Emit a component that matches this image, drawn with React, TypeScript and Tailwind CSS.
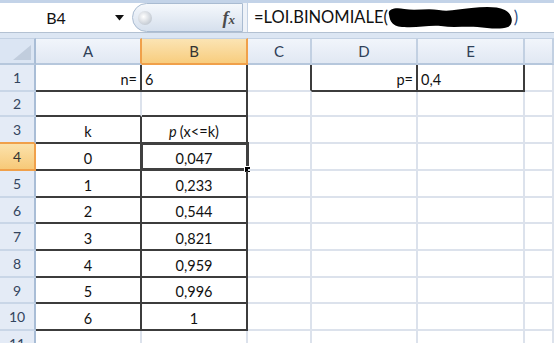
import React from 'react';

type CellProps = {
  dr?: boolean;
  db?: boolean;
  align?: 'left' | 'center' | 'right';
  children?: React.ReactNode;
  selected?: boolean;
};

// one sheet cell, right + bottom borders act as gridlines
const Cell = ({ dr, db, align = 'left', children, selected }: CellProps) => {
  const justify = align === 'center' ? 'justify-center' : align === 'right' ? 'justify-end' : 'justify-start';
  return (
    <div
      className={`relative flex items-end pb-[2px] px-[3px] leading-[17px] text-[14.5px] text-[#111] border-r-2 border-b-2 ${dr ? 'border-r-[#3c3c3c]' : 'border-r-[#dce2ec]'} ${db ? 'border-b-[#3c3c3c]' : 'border-b-[#dce2ec]'} ${justify}`}
    >
      {children}
      {selected && (
        <div className="absolute -left-[2px] -top-[2px] -right-[3px] -bottom-[2px] border-[3px] border-[#404040]">
          <div className="absolute -right-[5px] -bottom-[5px] w-[7px] h-[7px] bg-black border border-white" />
        </div>
      )}
    </div>
  );
};

const RowHead = ({ n, active, beforeActive }: { n: number; active?: boolean; beforeActive?: boolean }) => (
  <div
    className={`flex items-center justify-center text-[14px] border-r-2 border-b-2 ${active ? 'bg-linear-to-b from-[#fbe2ab] to-[#f7c978] border-r-[#f0a04a] border-b-[#f0a04a] text-[#333]' : 'bg-[#e4ebf6] border-r-[#a9bdd6] text-[#33455e]'} ${beforeActive ? 'border-b-[#f0a04a]' : active ? '' : 'border-b-[#c9d6e7]'}`}
  >
    {n}
  </div>
);

const ColHead = ({ label, active, beforeActive }: { label: string; active?: boolean; beforeActive?: boolean }) => (
  <div
    className={`flex items-center justify-center text-[15px] border-r-2 border-b-2 border-t border-t-[#c3d1e3] ${active ? 'bg-linear-to-b from-[#fbe4b3] to-[#f8cd7e] border-r-[#f0a04a] border-b-[#f0a04a] text-[#333]' : 'bg-linear-to-b from-[#f1f5fb] to-[#e1e8f3] border-b-[#b6c7dc] text-[#2f4058]'} ${beforeActive ? 'border-r-[#f0a04a]' : active ? '' : 'border-r-[#c2d0e2]'}`}
  >
    {label}
  </div>
);

const values = ['0,047', '0,233', '0,544', '0,821', '0,959', '0,996', '1'];

export default function App() {
  return (
    <div className="w-[554px] h-[343px] overflow-hidden bg-white font-['Lato',sans-serif]">
      {/* formula bar */}
      <div className="h-[3px] bg-[#c3d3e8]" />
      <div className="h-[29px] flex bg-white">
        <div className="w-[132px] relative flex items-center">
          <span className="w-[112px] text-center text-[16px] text-[#111]">B4</span>
          <svg className="absolute left-[115px] top-[12px]" width="9" height="6" viewBox="0 0 9 6">
            <path d="M0 0 L9 0 L4.5 5.5 Z" fill="#111" />
          </svg>
        </div>
        <div className="w-[111px] h-[29px] rounded-l-full border border-[#a9bbd1] bg-linear-to-b from-[#f5f8fc] to-[#d6e0ed] flex items-center justify-between pl-[5px] pr-[7px]">
          <div className="w-[14px] h-[14px] rounded-full bg-[radial-gradient(circle_at_40%_40%,#ffffff,#aeb7c3)]" />
          <span className="font-['Liberation_Serif',serif] italic font-semibold text-[18px] text-[#4b4b4b] leading-none">
            f<span className="text-[13px]">x</span>
          </span>
        </div>
        <div className="w-[5px] bg-[#eef2f8] border-r border-[#c3d1e3]" />
        <div className="flex-1 flex items-center pl-[6px] text-[16.5px] text-[#111] whitespace-nowrap">
          <span>=LOI.BINOMIALE(</span>
          <svg width="128" height="24" viewBox="0 0 126 24" preserveAspectRatio="none" className="-ml-[2px]">
            <path
              d="M3 9 C1 3 9 1 18 3 C30 5 40 2 52 4 C62 6 72 3 84 2 C96 1 108 0 117 4 C125 8 126 18 120 21 C112 24 100 22 90 21 C78 20 66 22 54 20 C42 19 30 22 18 21 C6 21 4 15 3 9 Z"
              fill="#000"
            />
          </svg>
          <span className="text-[#2d4f8a]">)</span>
        </div>
      </div>
      <div className="h-[1px] bg-[#b3c1d2]" />
      <div className="h-[5px] bg-[#dce6f3]" />

      {/* sheet */}
      <div className="grid grid-cols-[36px_106px_106px_64px_106px_107px_1fr] grid-rows-[27px_27px_25px_27px_27px_27px_26px_27px_27px_26px_27px_27px]">
        <div className="relative bg-[#dbe5f3] border-r-2 border-b-2 border-t border-t-[#c3d1e3] border-r-[#a9bdd6] border-b-[#b6c7dc]">
          <svg className="absolute right-[3px] bottom-[3px]" width="18" height="15" viewBox="0 0 18 15">
            <path d="M18 0 L18 15 L0 15 Z" fill="#c1cddd" />
          </svg>
        </div>
        <ColHead label="A" beforeActive />
        <ColHead label="B" active />
        <ColHead label="C" />
        <ColHead label="D" />
        <ColHead label="E" />
        <ColHead label="" />

        {/* row 1 */}
        <RowHead n={1} />
        <Cell dr db align="right">n=</Cell>
        <Cell dr db>6</Cell>
        <Cell dr />
        <Cell dr db align="right">p=</Cell>
        <Cell dr db>0,4</Cell>
        <Cell />

        {/* row 2 */}
        <RowHead n={2} />
        <Cell db />
        <Cell dr db />
        <Cell />
        <Cell />
        <Cell />
        <Cell />

        {/* row 3 */}
        <RowHead n={3} beforeActive />
        <Cell dr db align="center">k</Cell>
        <Cell dr db align="center">
          <span className="italic mr-[3px]">p</span>(x&lt;=k)
        </Cell>
        <Cell />
        <Cell />
        <Cell />
        <Cell />

        {values.map((v, i) => (
          <React.Fragment key={i}>
            <RowHead n={i + 4} active={i === 0} />
            <Cell dr db align="center">{i}</Cell>
            <Cell dr db align="center" selected={i === 0}>{v}</Cell>
            <Cell />
            <Cell />
            <Cell />
            <Cell />
          </React.Fragment>
        ))}

        {/* row 11, only its top shows */}
        <RowHead n={11} />
        <Cell />
        <Cell />
        <Cell />
        <Cell />
        <Cell />
        <Cell />
      </div>
    </div>
  );
}
